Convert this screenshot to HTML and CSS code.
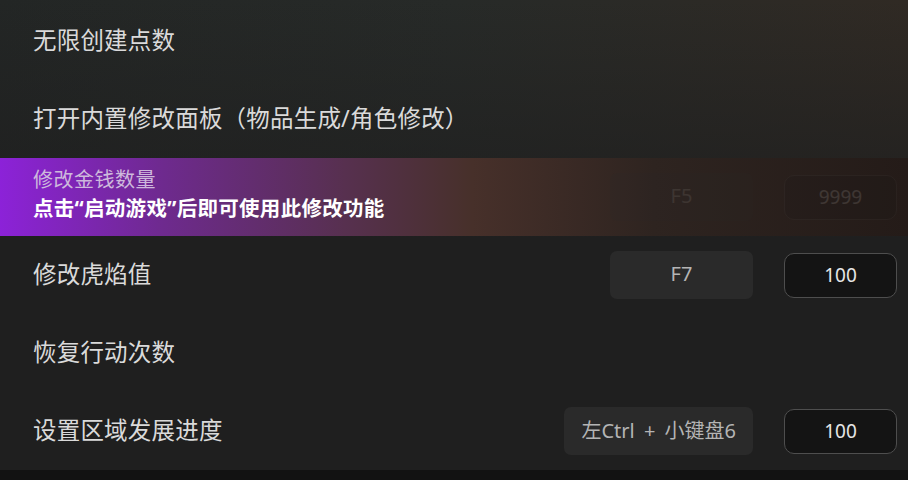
FILE: index.html
```html
<!DOCTYPE html>
<html lang="zh-CN">
<head>
    <meta charset="UTF-8">
    <title>修改器</title>
    <link rel="stylesheet" href="styles.css">
</head>
<body>
    <div class="cheat-list">
        <div class="row">
            <div class="label">无限创建点数</div>
        </div>
        <div class="row">
            <div class="label">打开内置修改面板（物品生成/角色修改）</div>
        </div>
        <div class="row row-locked">
            <div class="label">
                <div class="title">修改金钱数量</div>
                <div class="hint">点击“启动游戏”后即可使用此修改功能</div>
            </div>
            <div class="ctrls">
                <div class="hotkey">F5</div>
                <div class="value">9999</div>
            </div>
        </div>
        <div class="row">
            <div class="label">修改虎焰值</div>
            <div class="ctrls">
                <div class="hotkey">F7</div>
                <div class="value">100</div>
            </div>
        </div>
        <div class="row">
            <div class="label">恢复行动次数</div>
        </div>
        <div class="row">
            <div class="label">设置区域发展进度</div>
            <div class="ctrls">
                <div class="hotkey">左Ctrl + 小键盘6</div>
                <div class="value">100</div>
            </div>
        </div>
    </div>
    <div class="footer"></div>
</body>
</html>
```
FILE: styles.css
```css
body, html { margin: 0; padding: 0; height: 100%; overflow: hidden; background: #1f1f1f; font-family: "Noto Sans", "Noto Sans CJK SC", sans-serif; }
.cheat-list { padding-top: 2px; height: 468px; background: linear-gradient(180deg, rgba(31,31,31,0) 0, #1f1f1f 240px), linear-gradient(90deg, #232625 0%, #272a28 50%, #302a24 100%); }
.row { height: 78px; display: flex; align-items: center; padding: 0 11px 0 33px; box-sizing: border-box; }
.label { flex: 1; color: #dadada; font-size: 23.5px; letter-spacing: 0.2px; padding-bottom: 4px; }
.ctrls { display: flex; align-items: center; gap: 31px; }
.hotkey { min-width: 143px; height: 48px; box-sizing: border-box; padding: 0 17px 3px; background: #2a2a2a; border-radius: 7px; color: #b4b4b4; font-size: 20px; word-spacing: 4px; display: flex; align-items: center; justify-content: center; }
.value { width: 113px; height: 45px; box-sizing: border-box; border: 1px solid #4e4e4e; border-radius: 10px; background: #141414; color: #e6e6e6; font-size: 19px; display: flex; align-items: center; justify-content: center; padding-bottom: 1px; }
.row-locked { background: linear-gradient(90deg, #8c22d8 0%, #6e2a8e 18%, #57304f 38%, #47302a 52%, #2e2420 72%, #241b18 100%); }
.row-locked .label { line-height: 1.4; padding-bottom: 5px; }
.row-locked .title { font-size: 20px; color: #cdb9dc; letter-spacing: 0.5px; }
.row-locked .hint { font-size: 20.5px; font-weight: bold; color: #ffffff; letter-spacing: 0.3px; }
.row-locked .ctrls { opacity: 0.12; }
.footer { height: 10px; background: #121212; }
```
